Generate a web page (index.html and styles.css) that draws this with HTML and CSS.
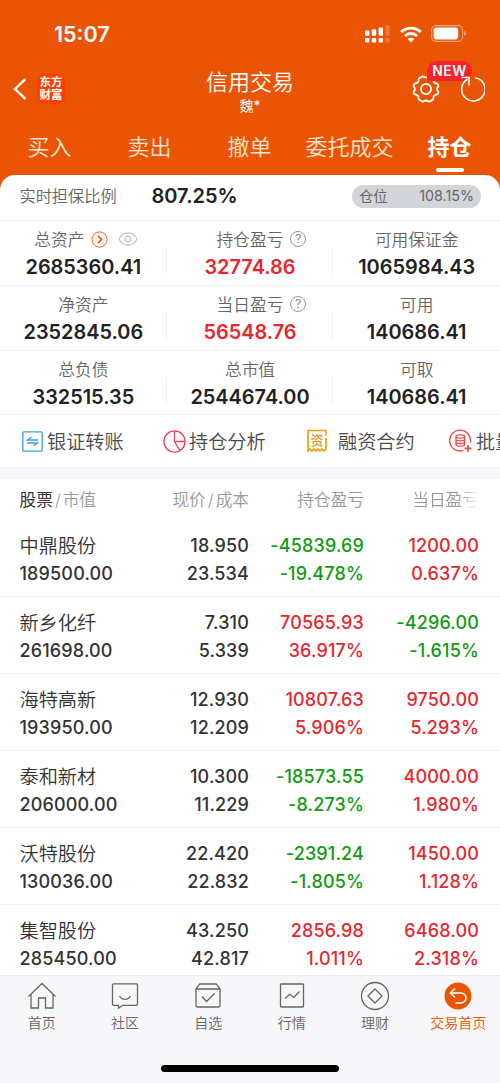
FILE: index.html
```html
<!DOCTYPE html>
<html lang="zh-CN">
<head>
  <meta charset="utf-8">
  <title>信用交易</title>
  <meta name="viewport" content="width=device-width, initial-scale=1">
  <link rel="stylesheet" href="styles.css">
</head>

<body>
  <div class="top">
    <div class="status">
      <div class="clock">15:07</div>
      <div class="status-icons">
        <svg width="25" height="18" viewBox="0 0 25 18" fill="#fff">
          <rect x="0" y="5.500" width="4.400" height="5.200" rx="1"/>
          <rect x="6.800" y="4.300" width="4.400" height="6.400" rx="1"/>
          <rect x="13.600" y="2.400" width="4.400" height="8.300" rx="1"/>
          <rect x="20.400" y="0.300" width="4.400" height="10.400" rx="1" opacity=".2"/>
          <rect x="0" y="13" width="4.400" height="4.400" rx="1"/>
          <rect x="6.800" y="13" width="4.400" height="4.400" rx="1"/>
          <rect x="13.600" y="13" width="4.400" height="4.400" rx="1"/>
          <rect x="20.400" y="13" width="4.400" height="4.400" rx="1" opacity=".2"/>
        </svg>
        <svg class="wifi" width="22" height="17" viewBox="0 0 22 17" fill="none" stroke="#fff" stroke-width="2.900">
          <path d="M1.200 6.100a14 14 0 0 1 19.600 0"/>
          <path d="M4.900 10a8.800 8.800 0 0 1 12.200 0"/>
          <path d="M11 16.400l-3.400-3.400a4.900 4.900 0 0 1 6.800 0z" fill="#fff" stroke="none"/>
        </svg>
        <svg class="battery" width="36" height="18" viewBox="0 0 36 18">
          <rect x=".6" y=".6" width="31" height="15.800" rx="4.500" fill="none" stroke="#fff" stroke-width="1.100" opacity=".5"/>
          <rect x="2.600" y="2.600" width="24.600" height="11.800" rx="2.800" fill="#fff"/>
          <path d="M33.200 6v5q1.800-.6 1.800-2.500t-1.800-2.500z" fill="#fff" opacity=".5"/>
        </svg>
      </div>
    </div>

    <div class="titlebar">
      <div class="side">
        <svg width="15" height="22" viewBox="0 0 15 22" fill="none" stroke="#fff" stroke-width="2.400">
          <path d="M14.500 1L4 11l10.500 10"/>
        </svg>
        <div class="brand"><div>东方</div><div>财富</div></div>
      </div>
      <div class="title">
        <div class="name">信用交易</div>
        <div class="user">魏*</div>
      </div>
      <div class="side side-right">
        <svg width="30" height="28" viewBox="0 0 30 28" fill="none" stroke="#fff" stroke-width="1.800" stroke-linejoin="round">
          <path d="M11.300 1.500C12.500 1 13 2.500 15 2.500S17.500 1 18.700 1.500L22 3.400C23 4.300 21.800 5.500 22.900 7.100S26.600 8.300 27.200 9.700C28.300 11.700 26 12 26 14S28.300 16.300 27.200 18.300C26.600 19.700 24 19.300 22.900 20.900S23 23.700 22 24.600L18.700 26.500C17.500 27 17 25.500 15 25.500S12.500 27 11.300 26.500L8 24.600C7 23.700 8.200 22.500 7.100 20.900S3.400 19.700 2.800 18.300C1.700 16.300 4 16 4 14S1.700 11.700 2.800 9.700C3.400 8.300 6 8.700 7.100 7.100S7 4.300 8 3.400Z"/>
          <circle cx="15" cy="14" r="5.100"/>
        </svg>
        <svg class="refresh" width="26" height="26" viewBox="0 0 26 26" fill="none" stroke="#fff" stroke-width="1.600">
          <path d="M15.800 1.700A11.700 11.700 0 1 1 8.500 3.200"/>
          <path d="M2.500 1.500h7.500v8"/>
        </svg>
        <div class="new">NEW</div>
      </div>
    </div>

    <div class="tabs">
      <div class="tab">买入</div>
      <div class="tab">卖出</div>
      <div class="tab">撤单</div>
      <div class="tab">委托成交</div>
      <div class="tab active">持仓</div>
    </div>
  </div>

  <div class="ratio">
    <div class="ratio-label">实时担保比例</div>
    <div class="ratio-value">807.25%</div>
    <div class="position"><span>仓位</span><span>108.15%</span></div>
  </div>

  <div class="assets">
    <div class="asset">
      <div class="label total">总资产
        <svg class="arrow" width="17" height="17" viewBox="0 0 17 17" fill="none" stroke="#d9683a">
          <circle cx="8.500" cy="8.500" r="7.600" fill="#fff4e4"/>
          <path d="M7 5l3.600 3.500L7 12" stroke="#b53c10" stroke-width="1.300"/>
        </svg>
        <svg class="eye" width="20" height="14" viewBox="0 0 20 14" fill="none" stroke="#c8c8c8" stroke-width="1.300">
          <path d="M1 7c4-8 14-8 18 0c-4 8-14 8-18 0z"/>
          <circle cx="10" cy="7" r="2.800"/>
        </svg>
      </div>
      <div class="value">2685360.41</div>
    </div>
    <div class="asset">
      <div class="label profit">持仓盈亏 <span class="help">?</span></div>
      <div class="value up">32774.86</div>
    </div>
    <div class="asset">
      <div class="label">可用保证金</div>
      <div class="value">1065984.43</div>
    </div>
    <div class="asset">
      <div class="label">净资产</div>
      <div class="value">2352845.06</div>
    </div>
    <div class="asset">
      <div class="label profit">当日盈亏 <span class="help">?</span></div>
      <div class="value up">56548.76</div>
    </div>
    <div class="asset">
      <div class="label">可用</div>
      <div class="value">140686.41</div>
    </div>
    <div class="asset">
      <div class="label">总负债</div>
      <div class="value">332515.35</div>
    </div>
    <div class="asset">
      <div class="label">总市值</div>
      <div class="value">2544674.00</div>
    </div>
    <div class="asset">
      <div class="label">可取</div>
      <div class="value">140686.41</div>
    </div>
  </div>

  <div class="shortcuts">
    <div class="shortcut transfer">
      <svg width="21" height="21" viewBox="0 0 21 21" fill="none" stroke="#3d9ee8" stroke-width="1.300">
        <rect x=".8" y=".8" width="19.400" height="19.400" rx="1"/>
        <path d="M16 9H5.500L9.500 6M5 12h10.500l-4 3"/>
      </svg>
      <span>银证转账</span>
    </div>
    <div class="shortcut analysis">
      <svg width="23" height="23" viewBox="0 0 23 23" fill="none" stroke="#ee4358" stroke-width="1.300">
        <circle cx="11.500" cy="11.500" r="10.600"/>
        <path d="M11.500 1v10.500H22M11.500 11.500l5.300 9"/>
      </svg>
      <span>持仓分析</span>
    </div>
    <div class="shortcut contract">
      <svg width="20" height="24" viewBox="0 0 20 24" fill="none" stroke="#f0a010" stroke-width="1.700">
        <path d="M19 6.500V1.500H1V22l2-2 2 2 2-2 2 2 2-2 2 2 2-2 2 2 2-2V9"/>
        <text x="10" y="15.500" text-anchor="middle" fill="#e8960a" stroke="none" font-size="13" font-weight="500">资</text>
      </svg>
      <span>融资合约</span>
    </div>
    <div class="shortcut batch">
      <svg width="23" height="24" viewBox="0 0 23 24" fill="none" stroke="#e84a45" stroke-width="1.300">
        <path d="M14.500 21.400A10.400 10.400 0 1 1 21.300 13.500"/>
        <ellipse cx="11.300" cy="7.500" rx="4.300" ry="1.600"/>
        <path d="M7 7.500v8c0 2.100 8.600 2.100 8.600 0v-8M7 10.200c0 2.100 8.600 2.100 8.600 0M7 12.900c0 2.100 8.600 2.100 8.600 0"/>
        <path d="M15.500 19.400h7M19 15.900v7" stroke-width="1.700"/>
      </svg>
      <span>批量</span>
    </div>
  </div>

  <div class="holdings">
    <div class="row head">
      <div><b>股票</b><i>/</i>市值</div>
      <div>现价<i>/</i>成本</div>
      <div>持仓盈亏</div>
      <div class="fade">当日盈亏</div>
    </div>
    <div class="row">
      <div><span class="stock">中鼎股份</span><span>189500.00</span></div>
      <div><span>18.950</span><span>23.534</span></div>
      <div class="down"><span>-45839.69</span><span>-19.478%</span></div>
      <div class="up"><span>1200.00</span><span>0.637%</span></div>
    </div>
    <div class="row">
      <div><span class="stock">新乡化纤</span><span>261698.00</span></div>
      <div><span>7.310</span><span>5.339</span></div>
      <div class="up"><span>70565.93</span><span>36.917%</span></div>
      <div class="down"><span>-4296.00</span><span>-1.615%</span></div>
    </div>
    <div class="row">
      <div><span class="stock">海特高新</span><span>193950.00</span></div>
      <div><span>12.930</span><span>12.209</span></div>
      <div class="up"><span>10807.63</span><span>5.906%</span></div>
      <div class="up"><span>9750.00</span><span>5.293%</span></div>
    </div>
    <div class="row">
      <div><span class="stock">泰和新材</span><span>206000.00</span></div>
      <div><span>10.300</span><span>11.229</span></div>
      <div class="down"><span>-18573.55</span><span>-8.273%</span></div>
      <div class="up"><span>4000.00</span><span>1.980%</span></div>
    </div>
    <div class="row">
      <div><span class="stock">沃特股份</span><span>130036.00</span></div>
      <div><span>22.420</span><span>22.832</span></div>
      <div class="down"><span>-2391.24</span><span>-1.805%</span></div>
      <div class="up"><span>1450.00</span><span>1.128%</span></div>
    </div>
    <div class="row">
      <div><span class="stock">集智股份</span><span>285450.00</span></div>
      <div><span>43.250</span><span>42.817</span></div>
      <div class="up"><span>2856.98</span><span>1.011%</span></div>
      <div class="up"><span>6468.00</span><span>2.318%</span></div>
    </div>
  </div>

  <div class="bottom">
    <div class="nav">
      <div class="nav-item">
        <svg width="30" height="30" viewBox="0 0 30 30">
          <path d="M1.500 15.500L15 2.500l13.500 13M4 13.500V27h7.500V17h7v10H26V13.500"/>
        </svg>
        <span>首页</span>
      </div>
      <div class="nav-item">
        <svg width="30" height="30" viewBox="0 0 30 30">
          <path d="M3.500 2.800h23q1 0 1 1v19.500q0 1-1 1H13L8.500 27v-2.700h-5q-1 0-1-1V3.800q0-1 1-1z"/>
          <path d="M9.500 15c2.500 4.500 8.500 4.500 11 0"/>
        </svg>
        <span>社区</span>
      </div>
      <div class="nav-item">
        <svg width="30" height="30" viewBox="0 0 30 30">
          <path d="M3 8l3-4.200q.4-.8 1.300-.8h15.400q.9 0 1.300.8L27 8M3 8h24v16.500q0 1.500-1.500 1.500h-21Q3 26 3 24.500z"/>
          <path d="M9 15.500l4.500 5 8-8"/>
        </svg>
        <span>自选</span>
      </div>
      <div class="nav-item">
        <svg width="30" height="30" viewBox="0 0 30 30">
          <rect x="3.500" y="3" width="23" height="23" rx=".8"/>
          <path d="M8 17.500l4.500-4.200 4.300 3.200 5.700-6"/>
        </svg>
        <span>行情</span>
      </div>
      <div class="nav-item">
        <svg width="30" height="30" viewBox="0 0 30 30">
          <circle cx="15" cy="15" r="13.500"/>
          <path d="M15 8l7 7-7 7-7-7z"/>
        </svg>
        <span>理财</span>
      </div>
      <div class="nav-item current">
        <svg width="30" height="30" viewBox="0 0 30 30">
          <circle cx="15" cy="15" r="13.500" class="disc"/>
          <path d="M12 7.500L7.500 12l4.500 4.500M7.500 12h10.500a5 5 0 0 1 0 10h-5.500" class="back"/>
        </svg>
        <span>交易首页</span>
      </div>
    </div>
    <div class="home-bar"></div>
  </div>
</body>
</html>
```
FILE: styles.css
```css
html, body {
  height: 100%;
  margin: 0;
}

body {
  width: 500px;
  height: 1083px;
  overflow: hidden;
  display: flex;
  flex-direction: column;
  background: #fff;
  color: #222;
  font-family: Inter, "Noto Sans CJK SC", sans-serif;
}

svg {
  display: block;
  flex: none;
}

.top {
  height: 190px;
  flex: none;
  background: #e95504;
  color: #fff;
}

.status {
  height: 68px;
  display: flex;
  justify-content: space-between;
  align-items: center;
  padding: 0 33px 0 54px;
}

.clock {
  font-size: 21.500px;
  font-weight: 600;
}

.status-icons {
  display: flex;
  align-items: center;
}

.wifi {
  margin-left: 10px;
}

.battery {
  margin-left: 9px;
}

.titlebar {
  height: 52px;
  display: flex;
  justify-content: space-between;
}

.side {
  width: 120px;
  height: 42px;
  display: flex;
  align-items: center;
  padding-left: 11px;
  box-sizing: border-box;
}

.side-right {
  position: relative;
  justify-content: flex-end;
  padding: 0 15px 0 0;
}

.refresh {
  position: relative;
  z-index: 1;
  margin-left: 18px;
}

.brand {
  width: 28px;
  height: 30px;
  margin-left: 11px;
  border-radius: 6px;
  background: #fb3f07;
  font-family: "Noto Sans CJK SC", sans-serif;
  font-size: 11.500px;
  font-weight: 700;
  line-height: 13px;
  text-align: center;
  padding-top: 1px;
  box-sizing: border-box;
}

.new {
  position: absolute;
  left: 47px;
  top: -7px;
  width: 45px;
  height: 20px;
  border-radius: 10px 10px 10px 3px;
  background: #f5222d;
  font-size: 13.800px;
  font-weight: 600;
  line-height: 20px;
  letter-spacing: .6px;
  text-align: center;
}

.title {
  text-align: center;
}

.name {
  font-size: 22px;
  font-weight: 350;
  line-height: 28px;
}

.user {
  font-size: 14px;
  line-height: 20px;
}

.tabs {
  display: flex;
}

.tab {
  width: 100px;
  height: 52px;
  font-size: 22px;
  font-weight: 350;
  line-height: 54px;
  text-align: center;
  text-indent: -1px;
  color: #ffe3cf;
}

.tab.active {
  color: #fff;
  font-weight: 700;
}

.tab.active::after {
  content: "";
  display: block;
  width: 28px;
  height: 4px;
  margin: -6px auto 0;
  border-radius: 2px;
  background: #fff;
}

.ratio {
  height: 46px;
  flex: none;
  margin-top: -15px;
  padding: 0 19px 3px 19.500px;
  box-sizing: border-box;
  display: flex;
  align-items: center;
  border-radius: 15px 15px 0 0;
  background: #fff;
  border-bottom: 1px solid #f5f5f5;
}

.ratio-label {
  width: 132px;
  font-size: 16.200px;
  font-weight: 350;
  line-height: 22px;
  padding-bottom: 1px;
  color: #666;
}

.ratio-value {
  flex: 1;
  font-size: 20px;
  font-weight: 600;
}

.position {
  width: 129px;
  height: 23px;
  padding: 0 7px 2px;
  box-sizing: border-box;
  display: flex;
  justify-content: space-between;
  align-items: center;
  border-radius: 12px;
  background: #d2d6da;
  color: #666;
  font-size: 14.300px;
}

.assets {
  display: grid;
  grid-template-columns: repeat(3, 1fr);
  grid-auto-rows: 64.800px;
  flex: none;
}

.asset {
  position: relative;
  padding-top: 6px;
  box-sizing: border-box;
  border-bottom: 1px solid #f4f4f4;
  text-align: center;
}

.asset:not(:nth-child(3n))::after {
  content: "";
  position: absolute;
  right: 0;
  top: 26px;
  height: 27px;
  border-right: 1px solid #f1f1f1;
}

.label {
  height: 24px;
  display: flex;
  justify-content: center;
  align-items: center;
  font-size: 16.700px;
  font-weight: 350;
  color: #666;
}

.total {
  padding-left: 6px;
}

.profit {
  padding-left: 23px;
}

.arrow {
  margin-left: 7px;
}

.eye {
  margin-left: 10px;
}

.help {
  width: 14px;
  height: 14px;
  margin-left: 7px;
  border: 1px solid #999;
  border-radius: 50%;
  font-size: 12px;
  line-height: 14px;
}

.value {
  font-size: 19.900px;
  font-weight: 600;
  line-height: 33px;
}

.up {
  color: #e9262d;
}

.down {
  color: #129b12;
}

.shortcuts {
  height: 52px;
  flex: none;
  display: flex;
  overflow: hidden;
  padding-left: 22px;
  border-bottom: 12px solid #f5f6f9;
  white-space: nowrap;
}

.shortcut {
  display: flex;
  flex: none;
  align-items: center;
  font-size: 19.200px;
  font-weight: 350;
  color: #4a4a4a;
}

.transfer {
  width: 141px;
  gap: 4px;
}

.analysis {
  width: 144px;
  gap: 3px;
}

.contract {
  width: 142px;
  gap: 11px;
}

.batch {
  gap: 4px;
}

.holdings {
  flex: 1;
  overflow: hidden;
}

.row {
  height: 76.900px;
  padding: 12px 21px 0 19.500px;
  box-sizing: border-box;
  display: grid;
  grid-template-columns: 1fr 110px 115px 115px;
  border-bottom: 1px solid #f5f5f5;
  font-size: 18px;
  font-weight: 500;
  letter-spacing: .15px;
  text-align: right;
  color: #333;
}

.row span {
  display: block;
  height: 28px;
  line-height: 28px;
}

.row > div:first-child {
  text-align: left;
}

.row .up {
  color: #e9262d;
}

.row .down {
  color: #129b12;
}

.row .stock {
  font-size: 19.200px;
  font-weight: 350;
  letter-spacing: 0;
}

.row.head {
  height: 41px;
  padding-top: 0;
  border: 0;
  font-size: 16.700px;
  font-weight: 350;
  letter-spacing: 0;
  line-height: 42px;
  color: #999;
}

.head b {
  font-weight: 400;
  color: #333;
}

.head i {
  font-style: normal;
  margin: 0 2px;
}

.fade {
  -webkit-mask-image: linear-gradient(to right, #000 82%, transparent 100%);
  mask-image: linear-gradient(to right, #000 82%, transparent 100%);
}

.bottom {
  height: 108px;
  flex: none;
  background: #f7f7fa;
  border-top: 1px solid #ececee;
  box-sizing: border-box;
}

.nav {
  height: 92px;
  display: flex;
}

.nav-item {
  flex: 1;
  display: flex;
  flex-direction: column;
  align-items: center;
  padding-top: 5px;
  font-size: 14px;
  font-weight: 350;
  line-height: 24px;
  color: #666;
}

.nav-item svg {
  fill: none;
  stroke: #666;
  stroke-width: 1.300;
}

.nav-item.current {
  color: #e95504;
}

.nav-item .disc {
  fill: #e95504;
  stroke: none;
}

.nav-item .back {
  stroke: #fff;
  stroke-width: 1.600;
}

.home-bar {
  width: 178px;
  height: 7px;
  margin: -3px auto 0;
  border-radius: 4px;
  background: #000;
}
```
